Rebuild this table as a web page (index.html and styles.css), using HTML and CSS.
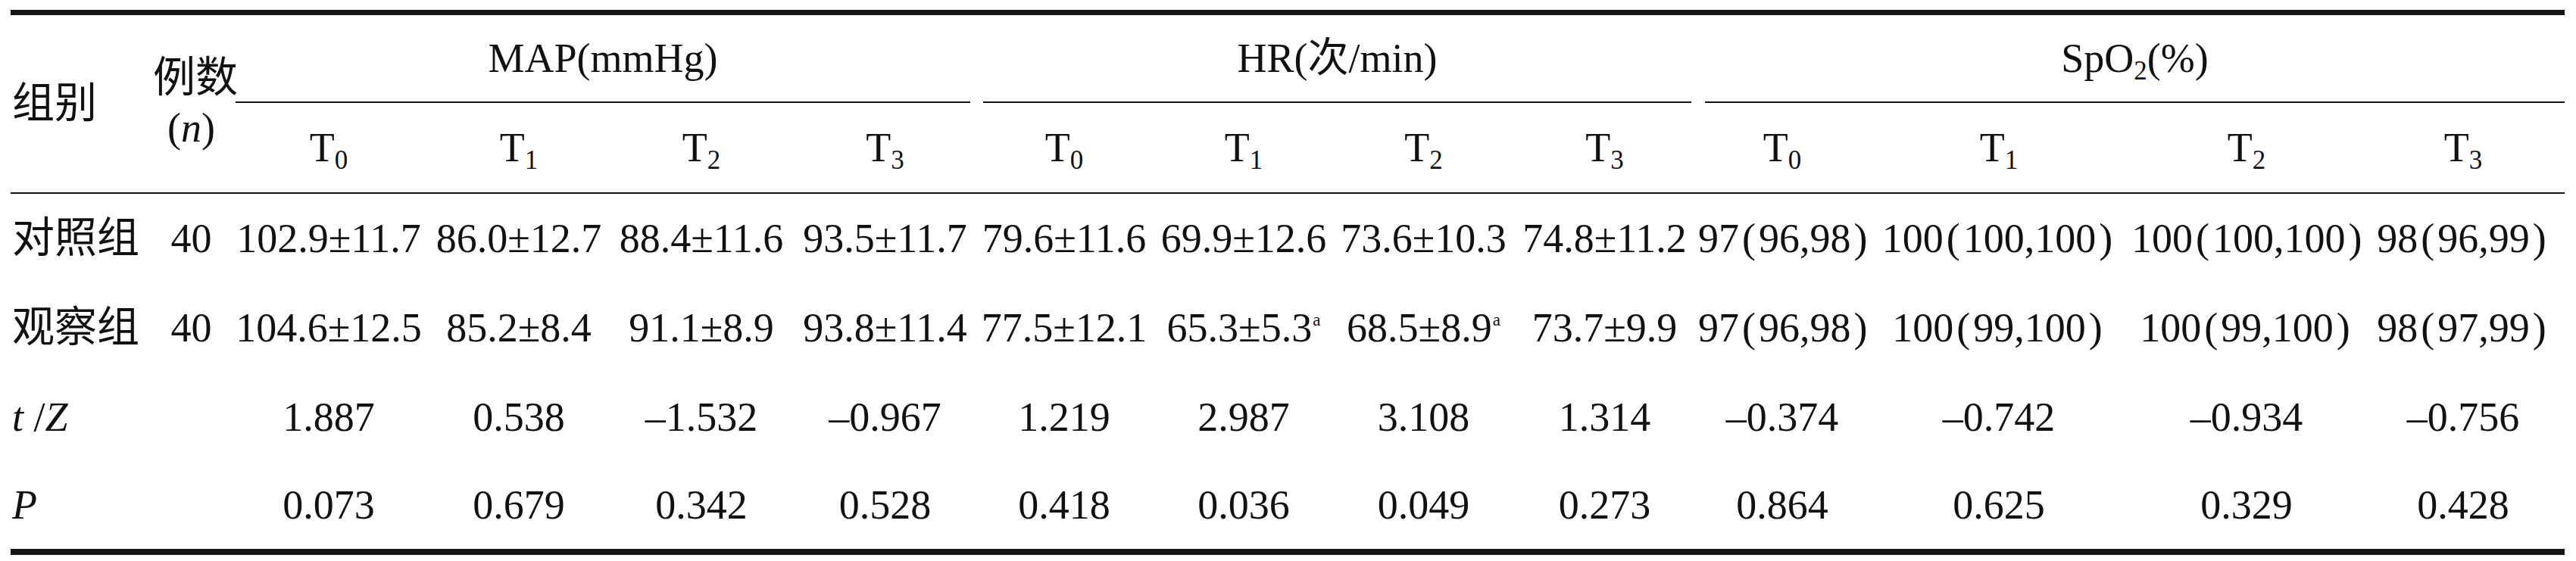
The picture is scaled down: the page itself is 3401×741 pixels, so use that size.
FILE: index.html
```html
<!DOCTYPE html>
<html lang="zh-CN">
<head>
<meta charset="utf-8">
<title>两组不同时点 MAP、HR、SpO2 比较</title>
<link rel="stylesheet" href="styles.css">
</head>
<body>
<table class="tbl">
  <colgroup>
    <col><col>
    <col><col><col><col>
    <col><col><col><col>
    <col><col><col><col>
  </colgroup>
  <thead>
    <tr class="h1">
      <th rowspan="2" class="lbl cn">组别</th>
      <th rowspan="2" class="num"><span class="cn">例数</span><br>(<i>n</i>)</th>
      <th colspan="4" class="grp"><div class="gl"><span>MAP(mmHg)</span></div></th>
      <th colspan="4" class="grp"><div class="gl"><span>HR(次/min)</span></div></th>
      <th colspan="4" class="grp"><div class="gl last"><span>SpO<sub>2</sub>(%)</span></div></th>
    </tr>
    <tr class="h2">
      <th>T<sub>0</sub></th><th>T<sub>1</sub></th><th>T<sub>2</sub></th><th>T<sub>3</sub></th>
      <th>T<sub>0</sub></th><th>T<sub>1</sub></th><th>T<sub>2</sub></th><th>T<sub>3</sub></th>
      <th>T<sub>0</sub></th><th>T<sub>1</sub></th><th>T<sub>2</sub></th><th>T<sub>3</sub></th>
    </tr>
  </thead>
  <tbody>
    <tr>
      <td class="lbl cn">对照组</td><td>40</td>
      <td>102.9±11.7</td><td>86.0±12.7</td><td>88.4±11.6</td><td>93.5±11.7</td>
      <td>79.6±11.6</td><td>69.9±12.6</td><td>73.6±10.3</td><td>74.8±11.2</td>
      <td>97<span class="pr">(</span>96,98<span class="pr">)</span></td>
      <td>100<span class="pr">(</span>100,100<span class="pr">)</span></td>
      <td>100<span class="pr">(</span>100,100<span class="pr">)</span></td>
      <td>98<span class="pr">(</span>96,99<span class="pr">)</span></td>
    </tr>
    <tr>
      <td class="lbl cn">观察组</td><td>40</td>
      <td>104.6±12.5</td><td>85.2±8.4</td><td>91.1±8.9</td><td>93.8±11.4</td>
      <td>77.5±12.1</td><td>65.3±5.3<sup>a</sup></td><td>68.5±8.9<sup>a</sup></td><td>73.7±9.9</td>
      <td>97<span class="pr">(</span>96,98<span class="pr">)</span></td>
      <td>100<span class="pr">(</span>99,100<span class="pr">)</span></td>
      <td>100<span class="pr">(</span>99,100<span class="pr">)</span></td>
      <td>98<span class="pr">(</span>97,99<span class="pr">)</span></td>
    </tr>
    <tr>
      <td class="lbl"><i>t</i> /<i>Z</i></td><td></td>
      <td>1.887</td><td>0.538</td><td>–1.532</td><td>–0.967</td>
      <td>1.219</td><td>2.987</td><td>3.108</td><td>1.314</td>
      <td>–0.374</td><td>–0.742</td><td>–0.934</td><td>–0.756</td>
    </tr>
    <tr>
      <td class="lbl"><i>P</i></td><td></td>
      <td>0.073</td><td>0.679</td><td>0.342</td><td>0.528</td>
      <td>0.418</td><td>0.036</td><td>0.049</td><td>0.273</td>
      <td>0.864</td><td>0.625</td><td>0.329</td><td>0.428</td>
    </tr>
  </tbody>
</table>
</body>
</html>
```

FILE: styles.css
```css
* {
  box-sizing: border-box;
}

html,
body {
  background: #ffffff;
}

body {
  margin: 13px 0 0 14px;
  font-family: "Liberation Serif", "Noto Sans CJK SC", serif;
  font-size: 54px;
  color: #111111;
}

.tbl {
  width: 3372px;
  table-layout: fixed;
  border-collapse: separate;
  border-spacing: 0;
  border-top: 7px solid #151515;
  border-bottom: 8px solid #151515;
}

.tbl col:nth-child(1)  { width: 188px; }
.tbl col:nth-child(2)  { width: 101px; }
.tbl col:nth-child(3)  { width: 262px; }
.tbl col:nth-child(4)  { width: 240px; }
.tbl col:nth-child(5)  { width: 242px; }
.tbl col:nth-child(6)  { width: 243px; }
.tbl col:nth-child(7)  { width: 230px; }
.tbl col:nth-child(8)  { width: 244px; }
.tbl col:nth-child(9)  { width: 231px; }
.tbl col:nth-child(10) { width: 247px; }
.tbl col:nth-child(11) { width: 222px; }
.tbl col:nth-child(12) { width: 350px; }
.tbl col:nth-child(13) { width: 304px; }
.tbl col:nth-child(14) { width: 268px; }

.tbl th,
.tbl td {
  padding: 0;
  font-weight: normal;
  text-align: center;
  vertical-align: middle;
  white-space: nowrap;
  line-height: 1.2;
}

.tbl thead th {
  border-bottom: 2px solid #151515;
}

.tbl thead th.grp {
  border-bottom: none;
  height: 116px;
}

.gl {
  height: 116px;
  margin: 0 9px 0 8px;
  display: flex;
  align-items: center;
  justify-content: center;
  border-bottom: 2px solid #151515;
}

.gl.last {
  margin: 0 0 0 9px;
}

.h2 th {
  height: 120px;
}

.tbl .lbl {
  text-align: left;
  padding-left: 2px;
}

.tbl .num {
  line-height: 66px;
  padding-bottom: 4px;
}

.cn {
  font-size: 56px;
}

.tbl tbody td {
  height: 118px;
}

.tbl tbody tr:last-child td {
  height: 115px;
}

sub {
  font-size: 35px;
  vertical-align: -10px;
  line-height: 0;
}

sup {
  font-size: 23px;
  vertical-align: 21px;
  line-height: 0;
  margin-left: 1px;
}

.pr {
  padding: 0 4px;
}
```
